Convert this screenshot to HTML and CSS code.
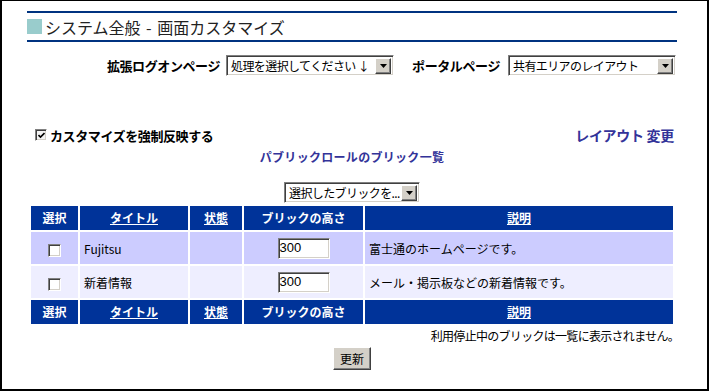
FILE: index.html
```html
<!DOCTYPE html>
<html lang="ja">
<head>
<meta charset="utf-8">
<title>システム全般 - 画面カスタマイズ</title>
<link rel="stylesheet" href="styles.css">
</head>
<body>
<div class="frame">
  <div class="title">
    <span class="title-mark"></span>
    <span class="title-text">システム全般 - 画面カスタマイズ</span>
  </div>

  <div class="selects">
    <span class="label">拡張ログオンページ</span>
    <div class="sel sel-wide">
      <span class="sel-text">処理を選択してください ↓</span>
      <span class="sel-btn"><svg width="7" height="4" viewBox="0 0 7 4"><polygon points="0,0 7,0 3.5,4" fill="#000"/></svg></span>
    </div>
    <span class="label label-2">ポータルページ</span>
    <div class="sel sel-wide">
      <span class="sel-text">共有エリアのレイアウト</span>
      <span class="sel-btn"><svg width="7" height="4" viewBox="0 0 7 4"><polygon points="0,0 7,0 3.5,4" fill="#000"/></svg></span>
    </div>
  </div>

  <div class="opts">
    <label class="force">
      <span class="chk chk-on"><svg width="7" height="7" viewBox="0 0 7 7"><polyline points="0.5,3 2.5,5 6.5,1" fill="none" stroke="#000" stroke-width="1.6"/></svg></span>
      <span>カスタマイズを強制反映する</span>
    </label>
    <a class="layout-link">レイアウト 変更</a>
  </div>

  <div class="list-title">パブリックロールのブリック一覧</div>

  <div class="bulk">
    <div class="sel sel-bulk">
      <span class="sel-text">選択したブリックを...</span>
      <span class="sel-btn"><svg width="7" height="4" viewBox="0 0 7 4"><polygon points="0,0 7,0 3.5,4" fill="#000"/></svg></span>
    </div>
  </div>

  <table class="bricks">
    <colgroup>
      <col class="c1"><col class="c2"><col class="c3"><col class="c4"><col class="c5">
    </colgroup>
    <thead>
      <tr class="head">
        <th>選択</th>
        <th><a>タイトル</a></th>
        <th><a>状態</a></th>
        <th>ブリックの高さ</th>
        <th><a>説明</a></th>
      </tr>
    </thead>
    <tbody>
      <tr class="row row-a">
        <td class="center"><span class="chk"></span></td>
        <td class="txt">Fujitsu</td>
        <td></td>
        <td class="center"><span class="num">300</span></td>
        <td class="txt">富士通のホームページです。</td>
      </tr>
      <tr class="row row-b">
        <td class="center"><span class="chk"></span></td>
        <td class="txt">新着情報</td>
        <td></td>
        <td class="center"><span class="num">300</span></td>
        <td class="txt">メール・掲示板などの新着情報です。</td>
      </tr>
    </tbody>
    <tfoot>
      <tr class="head">
        <th>選択</th>
        <th><a>タイトル</a></th>
        <th><a>状態</a></th>
        <th>ブリックの高さ</th>
        <th><a>説明</a></th>
      </tr>
    </tfoot>
  </table>

  <div class="note">利用停止中のブリックは一覧に表示されません。</div>

  <div class="actions">
    <button class="btn" type="button">更新</button>
  </div>
</div>
</body>
</html>
```

FILE: styles.css
```css
html, body {
  margin: 0;
  padding: 0;
  background: #fff;
}

body {
  font-family: "Noto Sans CJK JP", "DejaVu Sans", sans-serif;
  font-size: 12px;
  color: #000;
}

.frame {
  width: 709px;
  height: 391px;
  box-sizing: border-box;
  border-top: 1px solid #000;
  border-left: 2px solid #000;
  border-right: 2px solid #000;
  border-bottom: 2px solid #000;
  padding-left: 25px;
  overflow: hidden;
}

/* title */
.title {
  width: 650px;
  margin-top: 10px;
  height: 27px;
  border-top: 2px solid #003380;
  border-bottom: 2px solid #003380;
  display: flex;
  align-items: center;
}

.title-mark {
  width: 15px;
  height: 15px;
  background: #99cccc;
  margin-right: 3px;
  flex: none;
}

.title-text {
  font-size: 16px;
  line-height: 20px;
  color: #222;
  letter-spacing: 0;
  word-spacing: 2px;
}

/* top selects */
.selects {
  width: 649px;
  margin-top: 13px;
  height: 21px;
  display: flex;
  justify-content: flex-end;
  align-items: center;
}

.label {
  font-weight: bold;
  font-size: 13px;
  letter-spacing: -0.4px;
  line-height: 21px;
  margin-right: 6px;
}

.label-2 {
  margin-left: 18px;
  margin-right: 8px;
}

.sel {
  box-sizing: border-box;
  height: 21px;
  display: flex;
  align-items: center;
  background: #fff;
  border: 1px solid;
  border-color: #808080 #fff #fff #808080;
  box-shadow: inset 1px 1px 0 #404040, inset -1px -1px 0 #d4d0c8;
  padding: 2px;
}

.sel-wide {
  width: 168px;
}

.sel-bulk {
  width: 136px;
}

.sel-text {
  flex: 1;
  font-size: 12px;
  line-height: 15px;
  padding-left: 2px;
  letter-spacing: -0.6px;
  white-space: nowrap;
  overflow: hidden;
}

.sel-btn {
  width: 16px;
  height: 16px;
  box-sizing: border-box;
  flex: none;
  background: #d4d0c8;
  border: 1px solid;
  border-color: #fff #404040 #404040 #fff;
  box-shadow: inset -1px -1px 0 #808080;
  display: flex;
  align-items: center;
  justify-content: center;
}

/* options row */
.opts {
  width: 647px;
  margin-top: 50px;
  height: 18px;
  display: flex;
  justify-content: space-between;
  align-items: center;
}

.force {
  display: flex;
  align-items: center;
  gap: 3px;
  padding-left: 8px;
  font-weight: bold;
  font-size: 13px;
  letter-spacing: -0.4px;
}

.chk {
  width: 13px;
  height: 13px;
  box-sizing: border-box;
  display: inline-flex;
  align-items: center;
  justify-content: center;
  background: #fff;
  border: 1px solid;
  border-color: #808080 #fff #fff #808080;
  box-shadow: inset 1px 1px 0 #404040, inset -1px -1px 0 #d4d0c8;
  vertical-align: middle;
}

.chk-on {
  width: 12px;
  height: 12px;
  background: #f4f4f4;
}

.layout-link {
  color: #333399;
  font-weight: bold;
  font-size: 14px;
  letter-spacing: -0.3px;
  line-height: 18px;
}

.list-title {
  width: 650px;
  margin-top: 5px;
  height: 16px;
  line-height: 16px;
  text-align: center;
  color: #333399;
  font-weight: bold;
  font-size: 12px;
  letter-spacing: 0.3px;
}

.bulk {
  width: 650px;
  margin-top: 17px;
  display: flex;
  justify-content: center;
}

/* table */
.bricks {
  margin-top: 1px;
  margin-left: 2px;
  width: 646px;
  table-layout: fixed;
  border-collapse: separate;
  border-spacing: 2px;
}

.c1 { width: 47px; }
.c2 { width: 108px; }
.c3 { width: 52px; }
.c4 { width: 119px; }
.c5 { width: 308px; }

.bricks th,
.bricks td {
  padding: 0;
  font-size: 12px;
}

.head th {
  height: 24px;
  background: #003399;
  color: #fff;
  font-weight: bold;
  text-align: center;
  line-height: 16px;
}

.head th a {
  color: #fff;
  text-decoration: underline;
}

.row td {
  height: 32px;
}

.row-a td {
  background: #ccccff;
}

.row-b td {
  background: #eeeeff;
}

.center {
  text-align: center;
}

.txt {
  padding-left: 4px !important;
  white-space: nowrap;
}

.num {
  display: inline-block;
  box-sizing: border-box;
  width: 52px;
  height: 21px;
  text-align: left;
  line-height: 17px;
  padding-left: 1px;
  font-family: "Liberation Sans", sans-serif;
  font-size: 13px;
  background: #fff;
  border: 1px solid;
  border-color: #808080 #fff #fff #808080;
  box-shadow: inset 1px 1px 0 #404040, inset -1px -1px 0 #d4d0c8;
  vertical-align: middle;
}

.note {
  width: 652px;
  margin-top: 3px;
  height: 14px;
  line-height: 14px;
  text-align: right;
  letter-spacing: -0.7px;
}

.actions {
  width: 650px;
  margin-top: 4px;
  display: flex;
  justify-content: center;
}

.btn {
  width: 38px;
  height: 23px;
  box-sizing: border-box;
  padding: 0;
  font-family: "Noto Sans CJK JP", sans-serif;
  font-size: 12px;
  background: #d4d0c8;
  border: 1px solid;
  border-color: #fff #404040 #404040 #fff;
  box-shadow: inset -1px -1px 0 #808080;
  color: #000;
}
```
